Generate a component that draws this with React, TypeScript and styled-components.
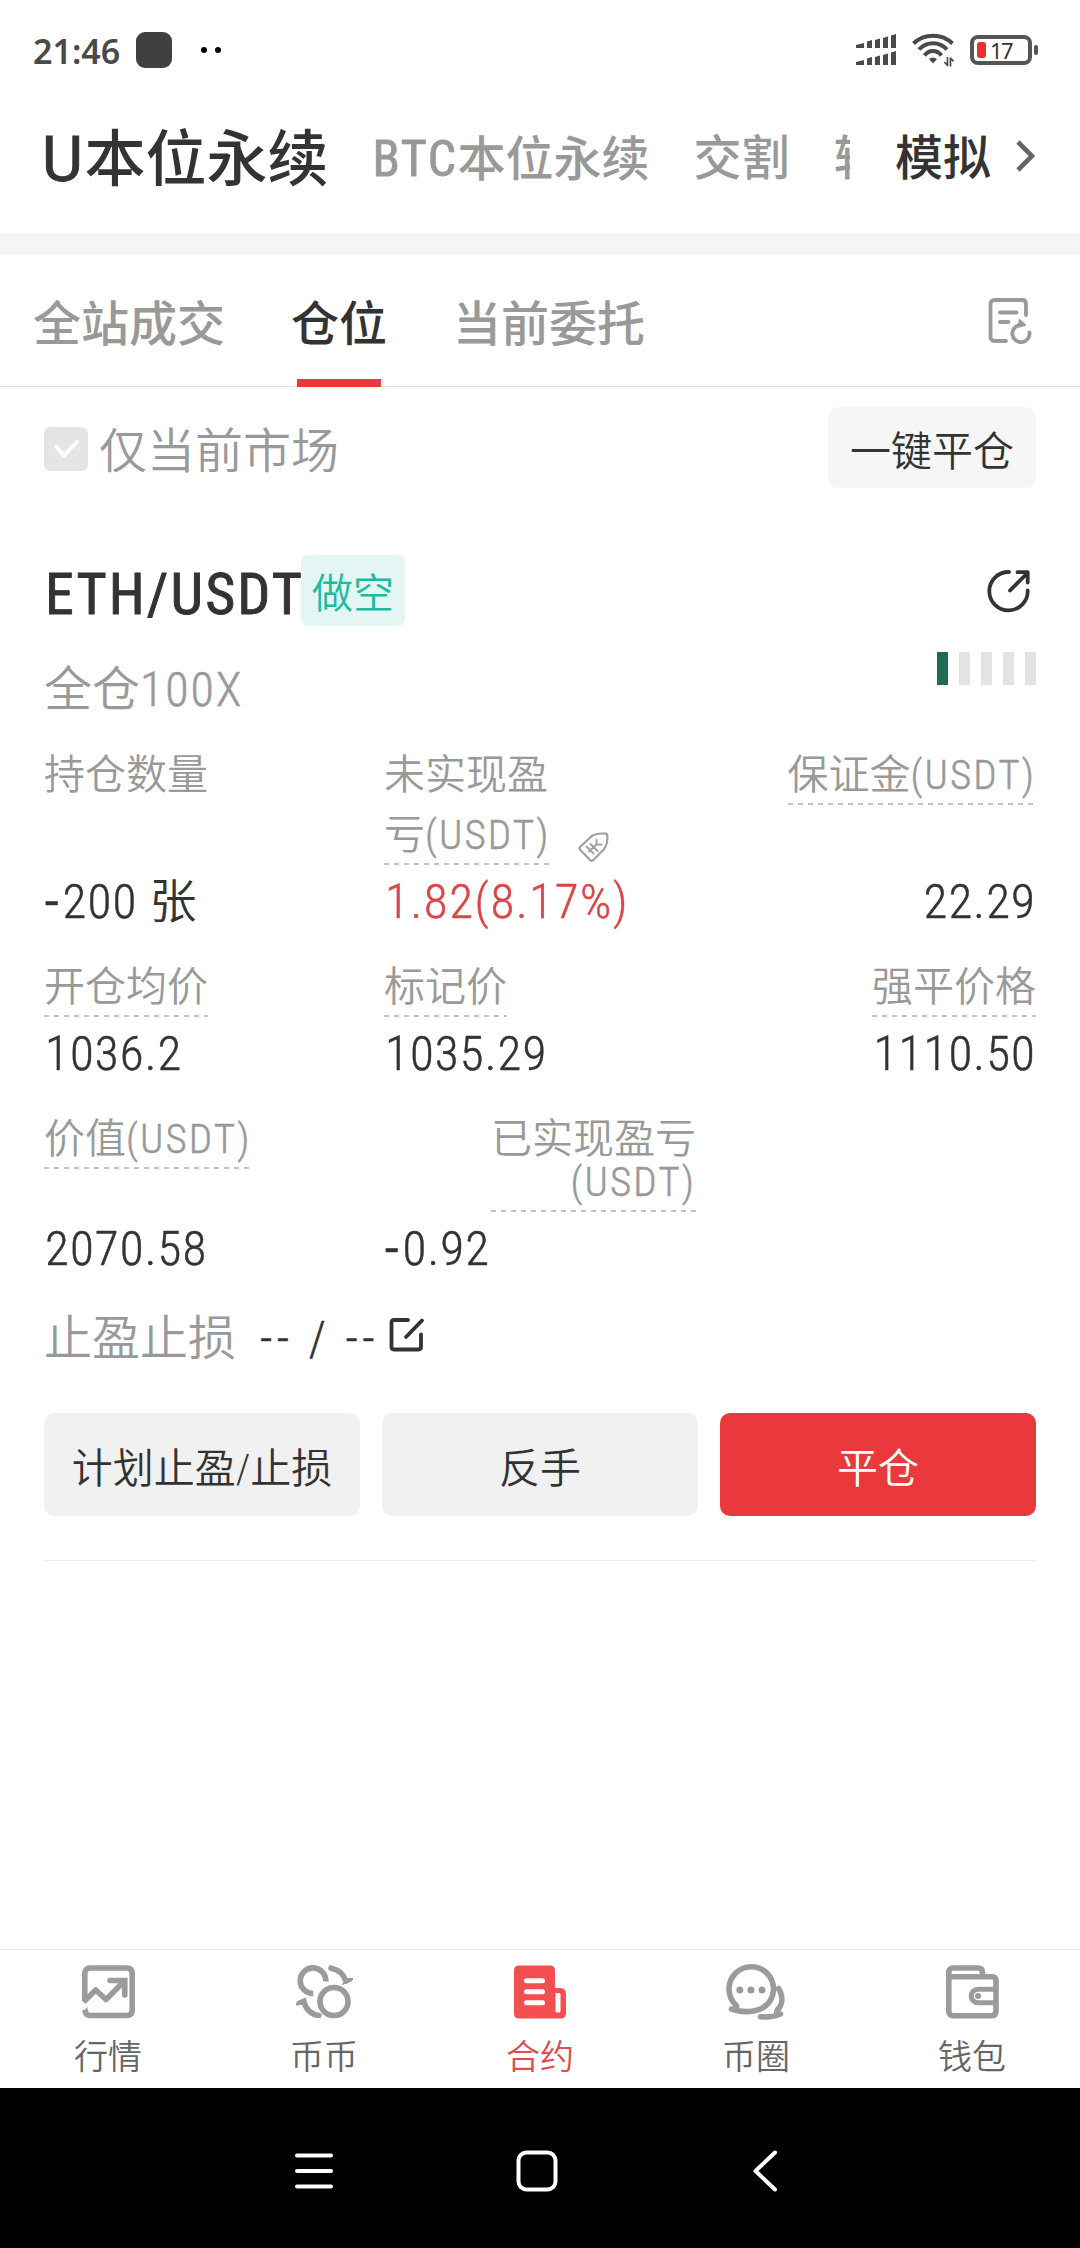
import React from "react";
import styled, { createGlobalStyle } from "styled-components";

const INK = "#333333";
const MUTED = "#999999";
const RED = "#e9393c";

const GlobalStyle = createGlobalStyle`
  * { box-sizing: border-box; }
  body { margin: 0; background: #fff; }
`;

const Screen = styled.div`
  width: 1080px;
  height: 2248px;
  display: flex;
  flex-direction: column;
  background: #fff;
  color: ${INK};
  font-family: "Roboto Condensed", "Noto Sans CJK SC", sans-serif;
  font-weight: 350;
  overflow: hidden;
  white-space: nowrap;
`;

const Icon = styled.svg`
  display: block;
  flex: none;
  fill: none;
  stroke: currentColor;
  stroke-linecap: round;
  stroke-linejoin: round;
`;

const Latin = styled.span<{ $gap: number }>`
  letter-spacing: ${(p) => p.$gap}px;
  -webkit-text-stroke: 0.5px currentColor;
`;

const TitleLatin = styled(Latin)<{ $size: number; $wide?: boolean }>`
  font-family: ${(p) => (p.$wide ? "Roboto" : '"Roboto Condensed"')}, sans-serif;
  font-size: ${(p) => p.$size}px;
  font-weight: 400;
  -webkit-text-stroke: 0.9px currentColor;
`;

/* ---------- status bar ---------- */

const StatusBar = styled.header`
  height: 100px;
  padding: 0 42px 0 33px;
  display: flex;
  align-items: center;
  color: #4a4a4a;
`;

const Clock = styled.span`
  font: 600 34px/40px "Noto Sans", sans-serif;
  width: 103px;
  padding-top: 2px;
`;

const AppSquare = styled.i`
  width: 36px;
  height: 36px;
  border-radius: 9px;
  background: #404040;
`;

const Dots = styled.div`
  display: flex;
  gap: 8px;
  margin-left: 29px;
  flex: 1;
  i {
    width: 6px;
    height: 6px;
    border-radius: 50%;
    background: #000;
  }
`;

const StatusIcons = styled.div`
  display: flex;
  align-items: center;
  gap: 16px;
`;

/* ---------- market tabs ---------- */

const MarketBar = styled.nav`
  height: 133px;
  display: flex;
  padding: 19px 44px 34px 42px;
  color: ${MUTED};
  font-weight: 500;
`;

const MarketList = styled.div`
  width: 809px;
  display: flex;
  gap: 44px;
  overflow: hidden;
`;

const Market = styled.span<{ $active?: boolean }>`
  flex: none;
  font-size: ${(p) => (p.$active ? 61 : 48)}px;
  line-height: ${(p) => (p.$active ? 81 : 80)}px;
  color: ${(p) => (p.$active ? INK : MUTED)};
`;

const DemoLink = styled.a`
  margin-left: 45px;
  display: flex;
  gap: 25px;
  font-size: 48px;
  line-height: 80px;
  color: ${INK};
  svg { margin-top: 20px; color: #666; }
`;

const Band = styled.div`
  height: 22px;
  background: #f5f5f5;
`;

/* ---------- section tabs ---------- */

const TabBar = styled.nav`
  height: 132px;
  padding: 0 48px 0 33px;
  display: flex;
  justify-content: space-between;
  border-bottom: 1px solid #e0e0e0;
`;

const Tabs = styled.div`
  display: flex;
  gap: 66px;
`;

const Tab = styled.div<{ $active?: boolean }>`
  height: 132px;
  display: flex;
  flex-direction: column;
  align-items: center;
  justify-content: space-between;
  font-size: 48px;
  line-height: 139px;
  font-weight: 500;
  color: ${(p) => (p.$active ? INK : MUTED)};
  span { height: 124px; }
  &::after {
    content: "";
    width: 84px;
    height: 8px;
    background: ${(p) => (p.$active ? RED : "transparent")};
  }
`;

const HistoryButton = styled.div`
  padding-top: 43px;
  color: #9a9a9a;
`;

const FilterRow = styled.div`
  height: 142px;
  padding: 20px 44px 0;
  display: flex;
  align-items: flex-start;
  justify-content: space-between;
`;

const Check = styled.label`
  display: flex;
  align-items: center;
  gap: 11px;
  padding-top: 17px;
  font-size: 48px;
  line-height: 44px;
  color: ${MUTED};
  span { padding-top: 6px; }
`;

const CheckBox = styled.i`
  width: 44px;
  height: 44px;
  border-radius: 6px;
  background: #e5e5e5;
  color: #fff;
`;

const CloseAll = styled.button`
  width: 208px;
  height: 81px;
  border: 0;
  border-radius: 11px;
  padding: 8px 0 0;
  background: #f6f6f6;
  color: ${INK};
  font: inherit;
  font-size: 41px;
  line-height: 72px;
`;

/* ---------- position card ---------- */

const Card = styled.section`
  margin: 0 44px;
  height: 1032px;
  border-bottom: 1px solid #ececec;
  display: flex;
  flex-direction: column;
`;

const Between = styled.div`
  display: flex;
  justify-content: space-between;
`;

const Pair = styled.div`
  display: flex;
  height: 110px;
  padding-top: 26px;
`;

const Symbol = styled.h2`
  margin: 0;
  width: 257px;
  padding-left: 1px;
  line-height: 78px;
  font-weight: 400;
`;

const Side = styled.span`
  width: 104px;
  height: 71px;
  padding-top: 7px;
  border-radius: 7px;
  background: #e4f6f4;
  color: #1dbb9f;
  font-size: 41px;
  line-height: 65px;
  text-align: center;
`;

const ShareButton = styled.div`
  padding: 41px 6px 0 0;
`;

const Leverage = styled.div`
  height: 106px;
  font-size: 48px;
  line-height: 102px;
  color: ${MUTED};
`;

const Risk = styled.div`
  display: flex;
  gap: 11px;
  padding-top: 13px;
`;

const RiskBar = styled.i<{ $on?: boolean }>`
  width: 11px;
  height: 33px;
  background: ${(p) => (p.$on ? "#1f6b57" : "#e3e3e3")};
`;

const Stats = styled.div<{ $label: number; $gap: number }>`
  display: grid;
  grid-template-columns: 340px 312px 340px;
  grid-template-rows: ${(p) => p.$label}px 73px;
  margin-bottom: ${(p) => p.$gap}px;
`;

const Cell = styled.div<{ $end?: boolean }>`
  display: flex;
  align-items: flex-start;
  justify-content: ${(p) => (p.$end ? "flex-end" : "flex-start")};
`;

const Label = styled.div<{ $dashed?: boolean; $tight?: boolean }>`
  font-size: 41px;
  line-height: ${(p) => (p.$tight ? 43 : 60)}px;
  padding: ${(p) => (p.$tight ? "9px 0 8px" : "0")};
  text-align: ${(p) => (p.$tight ? "right" : "left")};
  color: ${MUTED};
  background: ${(p) =>
    p.$dashed
      ? "repeating-linear-gradient(90deg, #c2c2c2 0 5px, transparent 5px 10px) left bottom / 100% 2px no-repeat"
      : "none"};
`;

const TagSlot = styled.div`
  padding: 86px 0 0 26px;
  color: #a0a0a0;
`;

const Value = styled.div<{ $end?: boolean; $color?: string; $gap?: number }>`
  font-size: 49px;
  line-height: 73px;
  letter-spacing: ${(p) => p.$gap || 1.1}px;
  padding-left: 1px;
  text-align: ${(p) => (p.$end ? "right" : "left")};
  color: ${(p) => p.$color || INK};
  -webkit-text-stroke: 0.45px currentColor;
  small {
    font-size: 47px;
    -webkit-text-stroke: 0;
  }
`;

const Minus = styled.span`
  font-family: Roboto, sans-serif;
  font-weight: 400;
  letter-spacing: 4px;
`;

const StopRow = styled.div`
  display: flex;
  height: 128px;
  font-size: 48px;
  line-height: 108px;
  color: ${MUTED};
  b {
    margin-left: 24px;
    width: 129px;
    font-weight: 350;
    color: ${INK};
  }
  svg { margin-top: 32px; color: ${INK}; }
`;

const Actions = styled.div`
  display: grid;
  grid-template-columns: repeat(3, 316px);
  gap: 22px;
`;

const Action = styled.button<{ $primary?: boolean }>`
  height: 103px;
  border: 0;
  border-radius: 10px;
  padding: 8px 0 0;
  font: inherit;
  font-size: 41px;
  line-height: 94px;
  background: ${(p) => (p.$primary ? RED : "#f1f1f1")};
  color: ${(p) => (p.$primary ? "#fff" : INK)};
`;

/* ---------- bottom navigation ---------- */

const BottomNav = styled.nav`
  margin-top: auto;
  height: 139px;
  display: grid;
  grid-template-columns: repeat(5, 216px);
  border-top: 1px solid #ececec;
`;

const NavItem = styled.a<{ $active?: boolean }>`
  display: flex;
  flex-direction: column;
  align-items: center;
  padding-top: 15px;
  font-size: 34px;
  line-height: 40px;
  color: ${(p) => (p.$active ? "#e24a4d" : "#666")};
`;

const NavIcon = styled.span<{ $active?: boolean }>`
  height: 54px;
  margin-bottom: 18px;
  display: flex;
  align-items: center;
  color: ${(p) => (p.$active ? "#f54e51" : "#9b9b9b")};
`;

const SystemBar = styled.footer`
  height: 160px;
  flex: none;
  display: flex;
  align-items: center;
  padding: 6px 0 0 294px;
  background: #000;
  color: #fff;
`;

const HomeKey = styled.span`
  margin: 0 194px 0 182px;
`;

const SignalIcon = () => (
  <Icon width="40" height="32" viewBox="0 0 40 32" style={{ fill: "currentColor", stroke: "none" }}>
    <path d="M0 14v-3l8-2v5zM11 14V7.500l5-1.500v8zM19 14V6l5-1.500V14zM27 14V4l5-1.500V14zM35 14V1.500L40 0v14z" />
    <path d="M0 31v-3l8-2v5zM11 31v-6.500l5-1.500v8zM19 31v-8l5-1.500V31zM27 31V21l5-1.500V31zM35 31V18.500l5-1.500v14z" />
  </Icon>
);

const WifiIcon = () => (
  <Icon width="42" height="34" viewBox="0 0 42 34" strokeWidth="4" style={{ strokeLinecap: "butt" }}>
    <path d="M1.500 10.500C12 0 30 0 40.500 10.500M7 16.500C14.500 8 27.500 8 35 16.500M12.500 22.500C17 16.500 25 16.500 29.500 22.500" />
    <path d="M17 26q4-3 8 0l-4 4.500z" fill="currentColor" stroke="none" />
    <path d="M35.500 24v8.500l-3-3.500M38.500 33.500V25l3 3.500" strokeWidth="1.700" />
  </Icon>
);

const BatteryBox = styled.div`
  display: flex;
  align-items: center;
`;

const BatteryBody = styled.div`
  width: 62px;
  height: 30px;
  border: 4px solid #555;
  border-radius: 8px;
  display: flex;
  align-items: center;
  padding-left: 3px;
  font: 400 22px/22px "Noto Sans", sans-serif;
  color: #333;
  letter-spacing: -1.500px;
  i {
    width: 9px;
    height: 16px;
    margin-right: 4px;
    border-radius: 3px;
    background: #e8302f;
  }
`;

const BatteryTip = styled.i`
  width: 4px;
  height: 10px;
  margin-left: 2px;
  border-radius: 2px;
  background: #555;
`;

const MarketIcon = () => (
  <Icon width="53" height="54" viewBox="0 0 53 54" strokeWidth="5.600" style={{ strokeLinecap: "butt", strokeLinejoin: "miter" }}>
    <path d="M2.800 36V8.500q0-5.500 5.500-5.500h36.400q5.500 0 5.500 5.500v36.500q0 5.500-5.500 5.500H8.300q-4.800 0-5.400-5.500" />
    <path d="M1.500 37L13.700 25 24 34.500 42 16.500" strokeLinejoin="round" />
    <path d="M28 15.500h14.800V30" strokeLinecap="round" />
    <path d="M.8 46.500L5.600 42v5z" fill="currentColor" stroke="none" />
  </Icon>
);

const SwapIcon = () => (
  <Icon width="57" height="54" viewBox="0 0 57 54" strokeWidth="5.600" style={{ strokeLinecap: "butt" }}>
    <circle cx="38" cy="36.500" r="14" />
    <path d="M29.800 16.500A12.800 12.800 0 1 0 17.300 28.500" />
    <path d="M35 3.200C43 4.500 47.500 9 50 16M23 50.500C15 49.500 10 44 8 37" strokeLinecap="round" />
    <path d="M46.500 19.500l3.500-6 7 0-1.500 2.500zM0 40l1.500-3.500L9.500 33l1 6z" fill="currentColor" strokeWidth="1" />
  </Icon>
);

const ContractIcon = () => (
  <Icon width="52" height="54" viewBox="0 0 52 54">
    <path d="M5 .5h31q5 0 5 5V23h5q6 0 6 6v19q0 5.500-5.500 5.500H5q-5 0-5-5v-43q0-5 5-5z" fill="currentColor" stroke="none" />
    <path d="M12.500 15.800h16M12.500 26.800h16M12.500 37.800h16" stroke="#fff" strokeWidth="5" />
    <path d="M41.500 28h3.500q1.500 0 1.500 1.500V46q0 1.500-1.500 1.500h-2q-1.500 0-1.500-1.500z" fill="#fff" stroke="none" />
  </Icon>
);

const ChatIcon = () => (
  <Icon width="64" height="58" viewBox="0 0 64 58" strokeWidth="5.600">
    <path d="M12.500 42.500A22.200 22.200 0 1 1 42 42.500C33 50 19 50 7.500 46q6 0 5-3.500z" />
    <path d="M54.500 25.500c5 8 4 16-1 21.500q-2.500 3.500 3 4-7 3.500-20 2.700" />
    <path d="M15.800 27h.01M26.900 27h.01M38 27h.01" strokeWidth="7" />
  </Icon>
);

const WalletIcon = () => (
  <Icon width="53" height="54" viewBox="0 0 53 54" strokeWidth="5.600" style={{ strokeLinecap: "butt" }}>
    <path d="M2.800 12V7.500Q2.800 3 7.300 3H32q4.500 0 4.500 4.500V11" />
    <path d="M2.800 11.800H46q4 0 4 4v30.400q0 4.500-4.500 4.500H7.300q-4.500 0-4.500-4.500z" />
    <path d="M50 24.200H32a6.800 6.800 0 0 0 0 13.600h18" strokeWidth="5" />
    <circle cx="32" cy="31" r="3" fill="currentColor" stroke="none" />
  </Icon>
);

const NAV = [
  { name: "行情", icon: <MarketIcon /> },
  { name: "币币", icon: <SwapIcon /> },
  { name: "合约", icon: <ContractIcon />, active: true },
  { name: "币圈", icon: <ChatIcon /> },
  { name: "钱包", icon: <WalletIcon /> },
];

const Usdt = () => <Latin $gap={2.1}>(USDT)</Latin>;

export default function App() {
  return (
    <Screen>
      <GlobalStyle />
      <StatusBar>
        <Clock>21:46</Clock>
        <AppSquare />
        <Dots><i /><i /></Dots>
        <StatusIcons>
          <SignalIcon />
          <WifiIcon />
          <BatteryBox>
            <BatteryBody><i />17</BatteryBody>
            <BatteryTip />
          </BatteryBox>
        </StatusIcons>
      </StatusBar>

      <MarketBar>
        <MarketList>
          <Market $active><TitleLatin $gap={1.6} $size={63} $wide>U</TitleLatin>本位永续</Market>
          <Market><TitleLatin $gap={1.6} $size={50}>BTC</TitleLatin>本位永续</Market>
          <Market>交割</Market>
          <Market>转</Market>
        </MarketList>
        <DemoLink>
          模拟
          <Icon width="20" height="34" viewBox="0 0 20 34" strokeWidth="4.600" style={{ strokeLinecap: "butt", strokeLinejoin: "miter" }}>
            <path d="M2 3l14 14L2 31" />
          </Icon>
        </DemoLink>
      </MarketBar>
      <Band />

      <TabBar>
        <Tabs>
          <Tab><span>全站成交</span></Tab>
          <Tab $active><span>仓位</span></Tab>
          <Tab><span>当前委托</span></Tab>
        </Tabs>
        <HistoryButton>
          <Icon width="44" height="47" viewBox="0 0 44 47" strokeWidth="3.800">
            <path d="M18 43H6.500q-4 0-4-4V6q0-4 4-4H34q4 0 4 4v11" />
            <path d="M12 14.500h16.500M12 24h8.500" />
            <path d="M32 27A8.600 8.600 0 1 0 41.500 34.500" />
            <path d="M31.500 22l5.500 5-5.500 1.500z" fill="currentColor" strokeWidth="2" />
          </Icon>
        </HistoryButton>
      </TabBar>

      <FilterRow>
        <Check>
          <CheckBox>
            <Icon width="44" height="44" viewBox="0 0 44 44" strokeWidth="3.800">
              <path d="M12 19.500l8 9L33 15" />
            </Icon>
          </CheckBox>
          <span>仅当前市场</span>
        </Check>
        <CloseAll>一键平仓</CloseAll>
      </FilterRow>

      <Card>
        <Between>
          <Pair>
            <Symbol><TitleLatin $gap={2.1} $size={58}>ETH/USDT</TitleLatin></Symbol>
            <Side>做空</Side>
          </Pair>
          <ShareButton>
            <Icon width="43" height="43" viewBox="0 0 43 43" strokeWidth="3.800">
              <path d="M22 2A19.200 19.200 0 1 0 40.700 20.500" />
              <path d="M23 20.500L40 3.500M30.500 2.200h10.200v10.300" />
            </Icon>
          </ShareButton>
        </Between>
        <Between>
          <Leverage>全仓<Latin $gap={1.9}>100X</Latin></Leverage>
          <Risk>
            <RiskBar $on /><RiskBar /><RiskBar /><RiskBar /><RiskBar />
          </Risk>
        </Between>

        <Stats $label={120} $gap={19}>
          <Cell><Label>持仓数量</Label></Cell>
          <Cell>
            <Label $dashed>未实现盈<br />亏<Usdt /></Label>
            <TagSlot>
              <Icon width="33" height="33" viewBox="0 0 33 33" strokeWidth="2.200">
                <path d="M3 18.500q-1.200-1.300 0-2.500L14.500 5.200Q19 2 28.300 2.600q1.900.1 2 2Q31 12 27 18.300L16.200 29.200q-1.500 1.300-2.900 0z" />
                <path d="M12 20.500l7.500-7M19.500 13.500V9M19.500 13.500H24.500M13.500 13l7 7M9.500 15.500l7 7" strokeWidth="2" />
              </Icon>
            </TagSlot>
          </Cell>
          <Cell $end><Label $dashed>保证金<Usdt /></Label></Cell>
          <Value><Minus>-</Minus>200 <small>张</small></Value>
          <Value $color="#dc4548" $gap={1.6}>1.82(8.17%)</Value>
          <Value $end>22.29</Value>
        </Stats>

        <Stats $label={60} $gap={19}>
          <Cell><Label $dashed>开仓均价</Label></Cell>
          <Cell><Label $dashed>标记价</Label></Cell>
          <Cell $end><Label $dashed>强平价格</Label></Cell>
          <Value>1036.2</Value>
          <Value>1035.29</Value>
          <Value $end>1110.50</Value>
        </Stats>

        <Stats $label={103} $gap={0}>
          <Cell><Label $dashed>价值<Usdt /></Label></Cell>
          <Cell $end><Label $dashed $tight>已实现盈亏<br /><Usdt /></Label></Cell>
          <Cell />
          <Value>2070.58</Value>
          <Value><Minus>-</Minus>0.92</Value>
        </Stats>

        <StopRow>
          止盈止损<b><Latin $gap={4.4}>-- / --</Latin></b>
          <Icon width="36" height="36" viewBox="0 0 36 36" strokeWidth="3.800">
            <path d="M19 3H5Q2.500 3 2.500 5.500V30Q2.500 32.500 5 32.500H29.500Q32 32.500 32 30V17.500" />
            <path d="M33 3.500L17 20" />
          </Icon>
        </StopRow>

        <Actions>
          <Action>计划止盈/止损</Action>
          <Action>反手</Action>
          <Action $primary>平仓</Action>
        </Actions>
      </Card>

      <BottomNav>
        {NAV.map((item) => (
          <NavItem key={item.name} $active={item.active}>
            <NavIcon $active={item.active}>{item.icon}</NavIcon>
            {item.name}
          </NavItem>
        ))}
      </BottomNav>

      <SystemBar>
        <Icon width="40" height="42" viewBox="0 0 40 42" strokeWidth="4">
          <path d="M3 5.500h34M3 21h34M3 36.500h34" />
        </Icon>
        <HomeKey>
          <Icon width="42" height="42" viewBox="0 0 42 42" strokeWidth="4">
            <rect x="2.500" y="2.500" width="37" height="37" rx="8" />
          </Icon>
        </HomeKey>
        <Icon width="26" height="42" viewBox="0 0 26 42" strokeWidth="4">
          <path d="M23 2.500L3.500 21 23 39.500" />
        </Icon>
      </SystemBar>
    </Screen>
  );
}
